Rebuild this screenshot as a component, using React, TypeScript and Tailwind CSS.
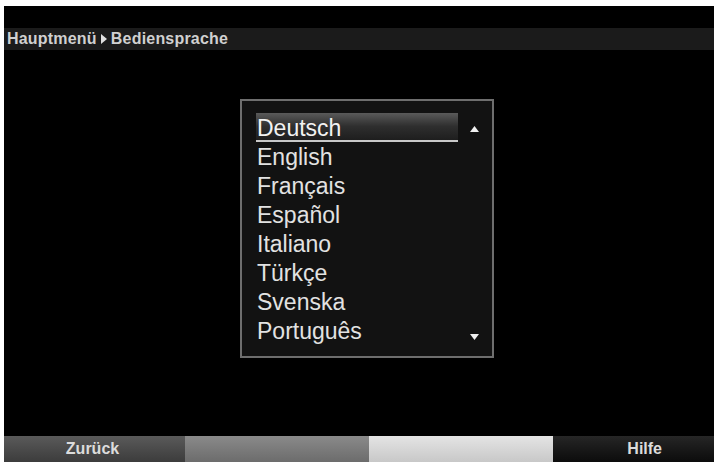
import { useState } from 'react';

const languages = ['Deutsch', 'English', 'Français', 'Español', 'Italiano', 'Türkçe', 'Svenska', 'Português'];

function App() {
  const [selected] = useState(0);

  return (
    <div
      className="w-[718px] h-[462px] bg-white pt-[6px] px-[4px] overflow-hidden"
      style={{ fontFamily: '"Liberation Sans", Arial, sans-serif' }}
    >
      <div className="h-full bg-black flex flex-col">
        {/* breadcrumb */}
        <div className="mt-[22px] h-[22px] bg-[#1b1b1b] flex items-center pl-[3px] text-[16px] font-bold tracking-[0.2px] text-[#d0d0d0]">
          <span>Hauptmenü</span>
          <svg width="6" height="10" viewBox="0 0 6 10" className="mx-[4px]">
            <path d="M0 0 L6 5 L0 10 Z" fill="#e0e0e0" />
          </svg>
          <span>Bediensprache</span>
        </div>

        {/* language list */}
        <div className="flex-1">
          <div className="ml-[236px] mt-[49px] w-[254px] h-[259px] border-2 border-[#6e6e6e] bg-[#121212] pl-[14px] pt-[12px] flex">
            <div className="w-[202px] flex flex-col">
              {languages.map((lang, i) => (
                <div
                  key={lang}
                  className={
                    i === selected
                      ? 'h-[29px] leading-[31px] text-[23px] text-[#f2f2f2] bg-gradient-to-b from-[#5a5a5a] via-[#2e2e2e] to-[#1e1e1e] border-b-2 border-[#c8c8c8] pl-[1px] overflow-hidden'
                      : 'h-[29px] leading-[31px] text-[23px] text-[#e2e2e2] pl-[1px]'
                  }
                >
                  {lang}
                </div>
              ))}
            </div>
            <div className="flex-1 flex flex-col items-center justify-between pt-[13px] pb-[16px] pr-[2px]">
              <svg width="9" height="6" viewBox="0 0 9 6">
                <path d="M4.5 0 L9 6 L0 6 Z" fill="#f0f0f0" />
              </svg>
              <svg width="9" height="6" viewBox="0 0 9 6">
                <path d="M0 0 L9 0 L4.5 6 Z" fill="#f0f0f0" />
              </svg>
            </div>
          </div>
        </div>

        {/* bottom function bar */}
        <div className="h-[26px] flex text-[16px] font-bold text-[#dcdcdc]">
          <div className="w-[181px] bg-gradient-to-b from-[#5a5a5a] to-[#3c3c3c] flex items-center justify-center pr-[4px]">
            Zurück
          </div>
          <div className="w-[184px] bg-gradient-to-b from-[#8a8a8a] to-[#6c6c6c]" />
          <div className="w-[184px] bg-gradient-to-b from-[#e4e4e4] to-[#c8c8c8]" />
          <div className="flex-1 bg-gradient-to-b from-[#262626] to-[#0c0c0c] flex items-center justify-end pr-[52px]">
            Hilfe
          </div>
        </div>
      </div>
    </div>
  );
}

export default App;
